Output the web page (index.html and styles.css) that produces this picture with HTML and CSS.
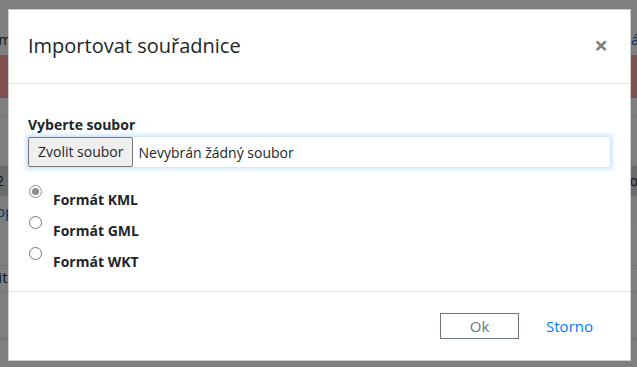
FILE: index.html
```html
<!DOCTYPE html>
<html lang="cs">
<head>
    <meta charset="UTF-8">
    <meta name="viewport" content="width=device-width, initial-scale=1.0">
    <title>Importovat souřadnice</title>
    <link rel="stylesheet" href="styles.css">
</head>
<body>
    <div class="page">
        <div class="topbar">
            <span class="nav-item nav-first">Souřadnice</span>
            <span class="nav-item nav-mid">Souřadnice z GeoJSON</span>
            <span class="nav-item nav-last">Zpět k plánu</span>
        </div>
        <div class="row row-title"><span>Seznam</span><span class="blue">Nápověda</span></div>
        <div class="alert-band"></div>
        <div class="row row-line"></div>
        <div class="row row-tall"></div>
        <div class="row row-head"><span>2</span><span>Poslední</span></div>
        <div class="row row-link"><span class="blue">Popis</span></div>
        <div class="row row-empty"></div>
        <div class="row row-text"><span>Povolit</span></div>
        <div class="row row-empty2"></div>
        <div class="row"></div>
    </div>

    <div class="backdrop">
        <div class="modal">
            <div class="modal-header">
                <h5 class="modal-title">Importovat souřadnice</h5>
                <span class="close">&times;</span>
            </div>

            <div class="modal-body">
                <div class="form-label">Vyberte soubor</div>
                <div class="file-input">
                    <span class="file-btn">Zvolit soubor</span>
                    <span class="file-name">Nevybrán žádný soubor</span>
                </div>

                <div class="radios">
                    <label class="radio-row">
                        <span class="radio checked"></span>
                        <span class="radio-text">Formát KML</span>
                    </label>
                    <label class="radio-row">
                        <span class="radio"></span>
                        <span class="radio-text">Formát GML</span>
                    </label>
                    <label class="radio-row">
                        <span class="radio"></span>
                        <span class="radio-text">Formát WKT</span>
                    </label>
                </div>
            </div>

            <div class="modal-footer">
                <button class="btn-ok">Ok</button>
                <button class="btn-link">Storno</button>
            </div>
        </div>
    </div>
</body>
</html>
```

FILE: styles.css
```css
body {
    margin: 0;
    padding: 0;
    font-family: "Open Sans", "Noto Sans", sans-serif;
    color: #212529;
    background: #fff;
    overflow: hidden;
}

/* page behind the dialog */
.page {
    height: 367px;
    overflow: hidden;
    font-size: 14px;
}
.topbar {
    height: 20px;
    display: flex;
    font-size: 13px;
    line-height: 28px;
}
.nav-item {
    padding-left: 40px;
}
.nav-first { width: 260px; }
.nav-mid { width: 380px; }
.row {
    display: flex;
    justify-content: space-between;
    border-bottom: 1px solid #eee;
    white-space: nowrap;
}
.row-title {
    height: 35px;
    line-height: 40px;
    border-bottom: none;
    margin-left: -40px;
}
.row-title span:last-child {
    margin-right: -50px;
}
.alert-band {
    height: 43px;
    background: #ffa09e;
}
.row-line { height: 18px; border-bottom: 1px solid #e4e4e4; }
.row-tall { height: 49px; border-bottom: none; }
.row-head {
    height: 30px;
    line-height: 30px;
    background: #d6d6d6;
    border-bottom: none;
    margin-left: -4px;
    margin-right: -40px;
}
.row-link {
    height: 28px;
    line-height: 30px;
    background: #fafafa;
    margin-left: -13px;
    font-size: 15px;
    border-bottom: none;
}
.row-empty { height: 41px; border-bottom: 1px solid #e4e4e4; }
.row-text {
    height: 25px;
    line-height: 22px;
    margin-left: -40px;
    font-size: 15px;
    border-bottom: 1px solid #e4e4e4;
}
.row-empty2 { height: 46px; border-bottom: 1px solid #e4e4e4; }
.blue { color: #0069d9; }

/* dialog */
.backdrop {
    position: fixed;
    top: 0;
    left: 0;
    right: 0;
    bottom: 0;
    background: rgba(0, 0, 0, 0.5);
}
.modal {
    margin: 9px 0 0 8px;
    width: 621px;
    height: 350px;
    background: #fff;
    border: 1px solid rgba(0, 0, 0, 0.2);
    display: flex;
    flex-direction: column;
}
.modal-header {
    height: 73px;
    border-bottom: 1px solid #dee2e6;
    display: flex;
    align-items: center;
    justify-content: space-between;
    padding: 0 22px 0 19px;
}
.modal-title {
    margin: 0;
    font-size: 20px;
    font-weight: 400;
    line-height: 30px;
    margin-top: -2px;
}
.close {
    font-size: 24px;
    font-weight: 700;
    color: #000;
    opacity: 0.5;
    line-height: 1;
    margin-top: -4px;
}

.modal-body {
    flex: 1;
    padding: 30px 20px 0 19px;
}
.form-label {
    font-size: 14px;
    font-weight: 700;
    line-height: 21px;
    margin-bottom: 2px;
}
.file-input {
    display: flex;
    align-items: center;
    height: 30px;
    box-shadow: 0 0 4px 2px rgba(128, 189, 255, 0.45);
    background: #fff;
}
.file-btn {
    height: 28px;
    line-height: 28px;
    padding: 0 8px 0 9px;
    background: #efefef;
    border: 1px solid #767676;
    border-radius: 2px;
    font-size: 14px;
}
.file-name {
    padding-left: 6px;
    font-size: 14px;
}

.radios {
    margin-top: 17px;
}
.radio-row {
    display: flex;
    align-items: flex-start;
    height: 31px;
}
.radio {
    width: 11px;
    height: 11px;
    border: 1px solid #767676;
    border-radius: 50%;
    margin: 1px 0 0 1px;
    position: relative;
}
.radio.checked {
    border-color: #8c8c8c;
}
.radio.checked::after {
    content: "";
    position: absolute;
    top: 2px;
    left: 2px;
    width: 7px;
    height: 7px;
    border-radius: 50%;
    background: #8c8c8c;
}
.radio-text {
    font-size: 14px;
    font-weight: 700;
    line-height: 21px;
    padding: 5px 0 0 11px;
}

.modal-footer {
    height: 68px;
    border-top: 1px solid #dee2e6;
    display: flex;
    align-items: center;
    justify-content: flex-end;
    padding: 0 26px 0 0;
}
.btn-ok {
    width: 79px;
    height: 26px;
    background: #fff;
    border: 1px solid #6c757d;
    color: #6c757d;
    font-family: inherit;
    font-size: 15px;
    padding: 0;
    margin-right: 16px;
}
.btn-link {
    background: none;
    border: none;
    color: #007bff;
    font-family: inherit;
    font-size: 15px;
    padding: 0 11px;
}
```
